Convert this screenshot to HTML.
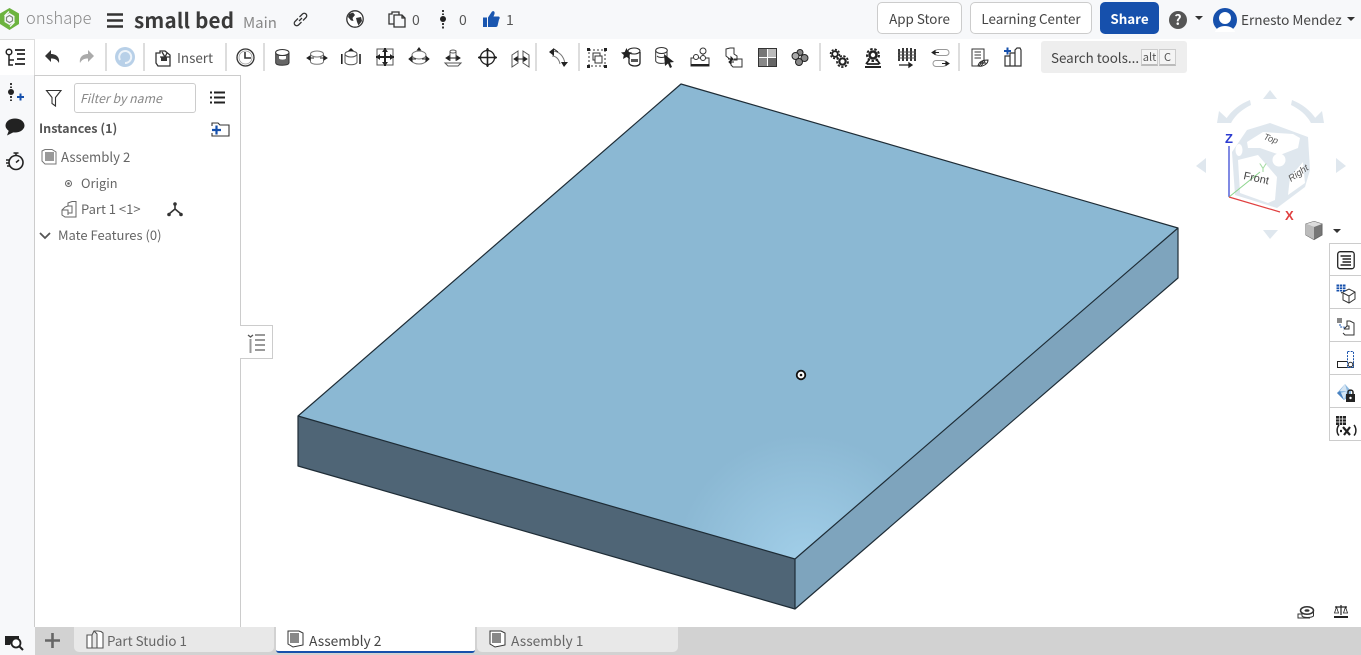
<!DOCTYPE html>
<html><head><meta charset="utf-8"><style>
html,body{margin:0;padding:0}
body{width:1361px;height:655px;position:relative;overflow:hidden;background:#fff;font-family:"Noto Sans CJK JP","Liberation Sans",sans-serif;color:#444}
.a{position:absolute}
.t{position:absolute;white-space:nowrap;line-height:18px}
.btn{position:absolute;top:2px;height:32px;box-sizing:border-box;border:1px solid #ccc;border-radius:5px;background:#fff;font-size:13.4px;text-align:center;line-height:30px;color:#444}
.sep{position:absolute;top:43px;width:2px;height:28px;background:#ddd}
svg{position:absolute;overflow:visible}
.s{fill:none;stroke:#333;stroke-width:1.3}
.tab{position:absolute;top:627px;height:25px;background:#e8e8e8;border-radius:0 0 5px 5px}
.rb{position:absolute;left:1329px;width:32px;height:33px;box-sizing:border-box;background:#fff;border:1px solid #ccc;border-right:none;border-top:none}
</style></head><body>
<div class="a" style="left:0;top:0;width:1361px;height:39px;background:#f7f8fa"></div>
<div class="a" style="left:0;top:39px;width:34px;height:588px;background:#f7f8fa"></div>
<div class="a" style="left:34px;top:39px;width:1327px;height:36px;background:#fff"></div>
<div class="a" style="left:0;top:39px;width:35px;height:36px;background:#fff;border-top:1px solid #ddd;border-right:1px solid #ddd;box-sizing:border-box"></div>

<!-- logo -->
<svg style="left:0;top:8px" width="20" height="22" viewBox="0 0 20 22"><path d="M9.500 0 19 5.500V16L9.500 22 0 16V5.500Z" fill="#6cb33f"/><path d="M9.500 5 14.500 8V14L9.500 17 4.500 14V8Z" fill="#f7f8fa"/><path d="M9.500 7.500 12.500 9.300V12.800L9.500 14.500 6.500 12.800V9.300Z" fill="none" stroke="#7d8a78" stroke-width="1.200"/><path d="M4.500 8 9 3.500M14.500 14 10 18.500" stroke="#f7f8fa" stroke-width="1.300"/></svg>
<div class="t" style="left:26px;top:8px;font-size:16.4px;color:#888;letter-spacing:.2px;font-weight:300">onshape</div>
<svg style="left:107px;top:13px" width="17" height="15"><path d="M0 1.500H16M0 7.500H16M0 13.500H16" stroke="#333" stroke-width="2.600" fill="none"/></svg>
<div class="t" style="left:134px;top:10px;font-size:20.6px;font-weight:700;color:#3a3a3a;letter-spacing:.2px">small bed</div>
<div class="t" style="left:243px;top:14px;font-size:15px;color:#888">Main</div>
<svg style="left:293px;top:12px" width="15" height="15" viewBox="0 0 15 15"><path d="M6 9 9 6M5 6.500 2 9.500a2.400 2.400 0 0 0 3.500 3.500L8.500 10M6.500 5 9.500 2a2.400 2.400 0 0 1 3.500 3.500L10 8.500" class="s" stroke-width="1.500"/></svg>
<svg style="left:346px;top:10px" width="18" height="18" viewBox="0 0 18 18"><circle cx="9" cy="9" r="8.200" fill="#fff" stroke="#333" stroke-width="1.300"/><path d="M3 4 7 2.500 9 5 6.500 8 7.500 11 5 10.500 2 7ZM10 8 15 7 16 11 12.500 15.500 11 12Z" fill="#333"/></svg>
<svg style="left:388px;top:11px" width="18" height="17" viewBox="0 0 18 17"><path d="M1 3H4V1H11V4H14L17 7V16H6V13H1ZM6 13V4H14M14 4V7H17" class="s"/></svg>
<div class="t" style="left:412px;top:11px;font-size:14px;color:#555">0</div>
<svg style="left:440px;top:10px" width="6" height="20"><path d="M3 0V5M3 13V19" stroke="#222" stroke-width="1.800" stroke-dasharray="2 1.500"/><circle cx="3" cy="9" r="3" fill="#222"/></svg>
<div class="t" style="left:459px;top:11px;font-size:14px;color:#555">0</div>
<svg style="left:483px;top:10px" width="17" height="18" viewBox="0 0 17 18"><path d="M0 7.500H4V17H0ZM5 7.500 9 1.500C11 0.500 12 2 11.500 4L10.500 6.500H15.500C17 6.500 17 8.500 16 9.500L14.500 16C14 17 13 17 12 17H5Z" fill="#1a56b0"/></svg>
<div class="t" style="left:506px;top:11px;font-size:14px;color:#555">1</div>

<div class="btn" style="left:877px;width:85px">App Store</div>
<div class="btn" style="left:970px;width:122px">Learning Center</div>
<div class="btn" style="left:1100px;width:59px;background:#1650ac;border-color:#1650ac;color:#fff;font-weight:700">Share</div>
<svg style="left:1169px;top:11px" width="18" height="18"><circle cx="9" cy="9" r="9" fill="#555"/></svg>
<div class="t" style="left:1169px;top:11px;width:18px;text-align:center;font-size:14px;font-weight:700;color:#fff">?</div>
<svg style="left:1195px;top:16px" width="9" height="5"><path d="M0 0H8L4 4Z" fill="#333"/></svg>
<svg style="left:1213px;top:8px" width="24" height="24" viewBox="0 0 24 24"><circle cx="12" cy="12" r="12" fill="#1650ac"/><circle cx="12" cy="10" r="6" fill="#fff"/><path d="M2 24C4 16 20 16 22 24Z" fill="#fff"/></svg>
<div class="t" style="left:1241px;top:10px;font-size:13.6px;color:#444">Ernesto Mendez</div>
<svg style="left:1347px;top:17px" width="9" height="5"><path d="M0 0H8L4 4Z" fill="#333"/></svg>

<!-- left rail -->
<svg style="left:5px;top:48px" width="22" height="20" viewBox="0 0 22 20"><circle cx="4" cy="4" r="2.800" fill="none" stroke="#222" stroke-width="1.500"/><path d="M4 7V17H8M4 12H9" fill="none" stroke="#222" stroke-width="1.500"/><path d="M10 2H20M12 6H20M12 11H20M10 16H20" stroke="#222" stroke-width="1.800"/></svg>
<svg style="left:8px;top:83px" width="18" height="20"><path d="M3 0V5M3 13V18" stroke="#222" stroke-width="1.800" stroke-dasharray="2 1.500"/><circle cx="3" cy="9" r="3" fill="#222"/><path d="M9 14H16M12.500 10.500V17.500" stroke="#1650ac" stroke-width="2"/></svg>
<svg style="left:5px;top:118px" width="20" height="18"><ellipse cx="10" cy="7.500" rx="9.500" ry="7" fill="#222"/><path d="M4 12 2 17.500 9 14Z" fill="#222"/></svg>
<svg style="left:6px;top:152px" width="19" height="19" viewBox="0 0 19 19"><circle cx="10" cy="10.500" r="7" fill="none" stroke="#222" stroke-width="1.600"/><path d="M7.500 1H12.500M10 1V3.500M10 10.500 13 8M0 8H4M0 11H3M1 14H4" stroke="#222" stroke-width="1.500" fill="none"/></svg>

<!-- toolbar -->
<svg style="left:45px;top:50px" width="15" height="14"><path d="M0 6 6 0V4C11 4 15 7 14 13 12 9.500 10 8.500 6 8.500V12Z" fill="#333"/></svg>
<svg style="left:80px;top:50px" width="15" height="14"><path d="M14 6 8 0V4C3 4-1 7 0 13 2 9.500 4 8.500 8 8.500V12Z" fill="#aaa"/></svg>
<div class="sep" style="left:105px"></div>
<svg style="left:115px;top:47px" width="21" height="21"><circle cx="10" cy="10" r="10" fill="#b8d0e8"/><path d="M5 13A6 6 0 1 1 10 16" fill="none" stroke="#eef4fa" stroke-width="2"/></svg>
<div class="sep" style="left:143px"></div>
<svg style="left:155px;top:49px" width="16" height="18" viewBox="0 0 16 18"><path d="M1 4H5V2H10L15 6V17H3L1 14ZM5 8H15M7 3 10 8 12 4" class="s"/><path d="M6 8H12V12H6Z" fill="#333"/></svg>
<div class="t" style="left:177px;top:48px;font-size:13.4px;color:#555">Insert</div>
<div class="sep" style="left:225px"></div>
<svg style="left:236px;top:48px" width="19" height="19"><circle cx="9.500" cy="9.500" r="8.500" fill="none" stroke="#333" stroke-width="1.300"/><circle cx="9.500" cy="9.500" r="6.500" fill="none" stroke="#999" stroke-width=".8"/><path d="M9 4V10H15" fill="none" stroke="#333" stroke-width="1.600"/></svg>
<div class="sep" style="left:263px"></div>

<svg style="left:275px;top:49px" width="15" height="18"><path d="M0.700 3.500V14C1.500 17 13 17 14 14V3.500" fill="#666" stroke="#333"/><ellipse cx="7.300" cy="3.500" rx="6.700" ry="3" fill="#fff" stroke="#333"/><path d="M4 7V9.500C5 11 10 11 11 9.500V7" fill="#fff"/></svg>
<svg style="left:307px;top:50px" width="20" height="16"><ellipse cx="10" cy="4" rx="6.500" ry="3" fill="none" stroke="#777"/><path d="M3.500 4V12C5 15 15 15 16.500 12V4" fill="none" stroke="#777"/><path d="M0 8H7M0 8 3 6V10ZM20 8H13M20 8 17 6V10Z" fill="#222" stroke="#222"/></svg>
<svg style="left:341px;top:48px" width="20" height="18"><path d="M0.800 6V16M19 6V16" stroke="#222" stroke-width="1.600"/><ellipse cx="10" cy="6" rx="6" ry="3" fill="#fff" stroke="#555"/><path d="M4 6V14.500C6 17.500 14 17.500 16 14.500V6" fill="none" stroke="#555"/><path d="M10 0 7 3H13Z" fill="#222"/></svg>
<svg style="left:376px;top:48px" width="18" height="18"><rect x="1" y="1" width="16" height="16" fill="none" stroke="#555"/><path d="M9 0V18M0 9H18" stroke="#222" stroke-width="2"/><path d="M9 0 6 4H12ZM9 18 6 14H12ZM0 9 4 6V12ZM18 9 14 6V12Z" fill="#222"/></svg>
<svg style="left:409px;top:47px" width="21" height="20"><ellipse cx="10" cy="8" rx="7" ry="4" fill="none" stroke="#777"/><path d="M3 8V14C5 18 15 18 17 14V8" fill="none" stroke="#777"/><path d="M10 0 7.500 3.500H12.500Z" fill="#222"/><path d="M0 12H7M0 12 3 9.500V14.500ZM20 12H13M20 12 17 9.500V14.500Z" fill="#222" stroke="#222"/></svg>
<svg style="left:444px;top:49px" width="18" height="18"><path d="M6 2H12V12M6 2V12M1 14H17L14 17H4Z" fill="none" stroke="#555"/><ellipse cx="9" cy="2.500" rx="3" ry="1.500" fill="#fff" stroke="#555"/><path d="M2 9H16M2 9 5 7V11ZM16 9 13 7V11Z" fill="#222" stroke="#222"/></svg>
<svg style="left:478px;top:48px" width="19" height="19"><circle cx="9.500" cy="9.500" r="7" fill="none" stroke="#222" stroke-width="1.300"/><path d="M9.500 0V19M0 9.500H19" stroke="#222" stroke-width="1.600"/><path d="M9.500 0 7 3H12ZM9.500 19 7 16H12ZM0 9.500 3 7V12ZM19 9.500 16 7V12Z" fill="#222"/></svg>
<svg style="left:512px;top:50px" width="17" height="17"><path d="M0 5 6 1V13L0 17ZM17 5 11 1V13L17 17Z" fill="none" stroke="#555"/><path d="M2 9H15M2 9 5 7V11ZM15 9 12 7V11Z" fill="#222" stroke="#222"/></svg>
<div class="sep" style="left:535px"></div>
<svg style="left:549px;top:48px" width="20" height="20"><path d="M3 3C10 3 15 8 16 16M3 8C7 8 10 11 11 16" fill="none" stroke="#777"/><path d="M0 4 5 0V8ZM15 19 12 14H19Z" fill="#222"/><path d="M5 1 9 4" stroke="#222"/></svg>
<div class="sep" style="left:578px"></div>
<svg style="left:587px;top:48px" width="20" height="20"><rect x="2" y="2" width="16" height="16" fill="none" stroke="#333" stroke-dasharray="2 2"/><rect x="6" y="5" width="7" height="7" fill="none" stroke="#333"/><rect x="8" y="8" width="7" height="7" fill="#fff" stroke="#333"/><path d="M0 0H3V3H0ZM17 0H20V3H17ZM0 17H3V20H0ZM17 17H20V20H17Z" fill="#222"/></svg>
<svg style="left:621px;top:47px" width="20" height="20"><path d="M8 6V16C9 20 19 20 19 16V5" fill="#fff" stroke="#222" stroke-width="1.300"/><ellipse cx="13" cy="4" rx="6" ry="3" fill="#fff" stroke="#222"/><path d="M5.500 1 7.300 5 11 5.500 8.200 8 9 12 5.500 10 2 12 2.800 8 0 5.500 3.700 5Z" fill="#222"/><path d="M10 12V15H17V12Z" fill="#555"/></svg>
<svg style="left:655px;top:47px" width="20" height="22"><path d="M0.700 3.500V14C1.500 17 9 17 12 15V3.500" fill="#fff" stroke="#333"/><ellipse cx="6.500" cy="3.500" rx="5.800" ry="3" fill="#fff" stroke="#333"/><path d="M2 9C4 11 9 11 11 9" fill="none" stroke="#333"/><path d="M9 7 19 15 15 15.500 17 20 15 21 13 16.500 10 19Z" fill="#222"/></svg>
<svg style="left:690px;top:47px" width="20" height="20"><circle cx="13" cy="4" r="3" fill="none" stroke="#333"/><path d="M13 7V10" stroke="#333"/><path d="M1 11H19V19H1Z" fill="none" stroke="#333"/><circle cx="6" cy="10" r="2.500" fill="#fff" stroke="#333"/><circle cx="13" cy="11" r="2.500" fill="#fff" stroke="#333"/><path d="M1 18H19" stroke="#222" stroke-width="2"/></svg>
<svg style="left:725px;top:47px" width="18" height="21"><path d="M1 2 5 1 9 1V7L12 9V13H6L1 9ZM9 12H17V20H8L6 18V14" fill="#fff" stroke="#333"/><path d="M3 12H8M8 12 6 10V14ZM9 15H4M4 15 6 13V17Z" fill="#222" stroke="#222"/></svg>
<svg style="left:758px;top:48px" width="19" height="19"><rect width="19" height="19" fill="#fff"/><path d="M0 0H9V9H0Z" fill="#777"/><path d="M10 10H19V19H10Z" fill="#666"/><path d="M10 0H19V9H10Z" fill="#bbb"/><path d="M0 10H9V19H0Z" fill="#888"/><rect x=".5" y=".5" width="18" height="18" fill="none" stroke="#333"/></svg>
<svg style="left:791px;top:49px" width="18" height="17"><circle cx="9" cy="3.500" r="3" fill="#888" stroke="#222"/><circle cx="13.500" cy="9" r="3.500" fill="#888" stroke="#222"/><circle cx="4.500" cy="7" r="3.500" fill="#aaa" stroke="#222"/><circle cx="8" cy="13" r="3.500" fill="#888" stroke="#222"/></svg>
<div class="sep" style="left:819px"></div>
<svg style="left:830px;top:49px" width="19" height="19"><circle cx="5" cy="5" r="2.800" fill="none" stroke="#222" stroke-width="1.800"/><circle cx="5" cy="5" r="4.500" fill="none" stroke="#222" stroke-width="1.500" stroke-dasharray="2 1.500"/><circle cx="12.500" cy="12.500" r="3.200" fill="none" stroke="#222" stroke-width="2.200"/><circle cx="12.500" cy="12.500" r="5.500" fill="none" stroke="#222" stroke-width="1.800" stroke-dasharray="2.300 1.500"/></svg>
<svg style="left:864px;top:48px" width="18" height="20"><circle cx="9" cy="7" r="3.500" fill="none" stroke="#222" stroke-width="2.600"/><circle cx="9" cy="7" r="6" fill="none" stroke="#222" stroke-width="2" stroke-dasharray="2.500 1.700"/><path d="M1 19H17" stroke="#222" stroke-width="2"/><path d="M2 16 5 12M16 16 13 12M3 16H15" stroke="#222" stroke-width="1.800"/></svg>
<svg style="left:898px;top:47px" width="18" height="20"><path d="M1 2 1 14M5 1 5 14M9 1 9 14M13 1 13 14M17 2 17 14" stroke="#222" stroke-width="1.800"/><path d="M0 5H18M0 8H18M0 11H18" stroke="#555"/><path d="M1 18H14M14 18 11 16V20Z" fill="#222" stroke="#222" stroke-width="1.300"/></svg>
<svg style="left:932px;top:49px" width="18" height="18"><rect x="3" y="0.500" width="14" height="6" rx="3" fill="#fff" stroke="#999"/><rect x="1" y="11.500" width="13" height="6" rx="3" fill="#fff" stroke="#999"/><path d="M0 3.500H7M0 3.500 3 1.500V5.500ZM17 14.500H10M17 14.500 14 12.500V16.500Z" fill="#222" stroke="#222"/></svg>
<div class="sep" style="left:958px"></div>
<svg style="left:971px;top:48px" width="18" height="20"><path d="M1 1H13V12L8 18H1Z" fill="#fff" stroke="#333"/><path d="M3.500 4H10M3.500 7H10M3.500 10H10" stroke="#333"/><path d="M7 18C8 13 13 12 17 12 17 16 12 19 7 18ZM9 15H15M10 18 14 13" fill="none" stroke="#222"/></svg>
<svg style="left:1004px;top:47px" width="18" height="20"><path d="M1 9H6V19H1ZM6 6H11V19H6ZM11 3 13 1H16L17 3V19H11Z" fill="#fff" stroke="#333" stroke-width="1.200"/><path d="M0 4H7M3.500 0.500V7.500" stroke="#1650ac" stroke-width="2"/></svg>

<div class="a" style="left:1041px;top:41px;width:146px;height:32px;background:#eee;border-radius:3px"></div>
<div class="t" style="left:1051px;top:48px;font-size:13.4px;color:#444">Search tools...</div>
<div class="a" style="left:1141px;top:49px;width:17px;height:17px;background:#f4f4f4;border:1px solid #ccc;border-bottom:2px solid #bbb;box-sizing:border-box;font-size:11px;line-height:15px;text-align:center;color:#555">alt</div>
<div class="a" style="left:1159px;top:49px;width:17px;height:17px;background:#f4f4f4;border:1px solid #ccc;border-bottom:2px solid #bbb;box-sizing:border-box;font-size:11px;line-height:15px;text-align:center;color:#555">C</div>

<!-- left panel -->
<div class="a" style="left:34px;top:75px;width:207px;height:552px;box-sizing:border-box;border:1px solid #ccc;border-bottom:none;background:#fff"></div>
<svg style="left:46px;top:90px" width="16" height="17"><path d="M0.500 0.500H15L9.500 7.500V16L6 13.500V7.500Z" fill="#fff" stroke="#333" stroke-width="1.100"/></svg>
<div class="a" style="left:74px;top:83px;width:122px;height:30px;box-sizing:border-box;border:1px solid #ccc;border-radius:3px;background:#fff;font-size:12.3px;font-style:italic;color:#888;line-height:28px;padding-left:5px">Filter by name</div>
<svg style="left:210px;top:91px" width="15" height="14"><path d="M0 1.500H2M4 1.500H15M0 6.500H2M4 6.500H15M0 11.500H2M4 11.500H15" stroke="#222" stroke-width="2"/></svg>
<div class="t" style="left:39px;top:119px;font-size:12.6px;font-weight:700;color:#555">Instances (1)</div>
<svg style="left:211px;top:122px" width="19" height="15"><path d="M1 4V1H7L9 3H18V14H1V11" fill="none" stroke="#333" stroke-width="1.100"/><path d="M1 8H10M5.500 3.500V12.500" stroke="#1650ac" stroke-width="2.200"/></svg>
<svg style="left:41px;top:149px" width="16" height="16"><path d="M1 2 4 0.500H11L15 3V15H4L1 12Z" fill="#fff" stroke="#777"/><path d="M4 3H13V12H4Z" fill="#999"/></svg>
<div class="t" style="left:61px;top:148px;font-size:13.2px;color:#666">Assembly 2</div>
<svg style="left:65px;top:180px" width="7" height="7"><circle cx="3.500" cy="3.500" r="3" fill="none" stroke="#666"/><circle cx="3.500" cy="3.500" r="1.300" fill="#666"/></svg>
<div class="t" style="left:81px;top:174px;font-size:12.8px;color:#666">Origin</div>
<svg style="left:61px;top:201px" width="16" height="17"><path d="M1 9 4 6 7 5V2L11 0.500H15V16H4L1 14ZM1 9H7V14" fill="#fff" stroke="#666"/><path d="M7 5 11 5V12H7" fill="none" stroke="#666"/></svg>
<div class="t" style="left:81px;top:200px;font-size:13px;color:#666">Part 1 &lt;1&gt;</div>
<svg style="left:167px;top:202px" width="16" height="15"><path d="M8 7V2M8 7 2 12M8 7 14 12" stroke="#333" stroke-width="1.600"/><circle cx="8" cy="2" r="1.800" fill="#333"/><circle cx="2" cy="12.500" r="1.800" fill="#333"/><circle cx="14" cy="12.500" r="1.800" fill="#333"/></svg>
<svg style="left:39px;top:232px" width="12" height="8"><path d="M1 1 6 6 11 1" fill="none" stroke="#555" stroke-width="1.800"/></svg>
<div class="t" style="left:58px;top:226px;font-size:13px;color:#666">Mate Features (0)</div>

<!-- panel tab -->
<div class="a" style="left:240px;top:325px;width:33px;height:34px;box-sizing:border-box;border:1px solid #ccc;border-left:none;background:#fff"></div>
<svg style="left:247px;top:334px" width="20" height="19"><path d="M1 1 3.500 3 6 1" fill="none" stroke="#555" stroke-width="1.300"/><path d="M3.500 5V19" stroke="#999" stroke-width="2"/><path d="M8 1H18M8 6H18M8 11H18M8 16H18" stroke="#333"/></svg>

<!-- model -->
<svg style="left:0;top:0" width="1361" height="655">
<defs><radialGradient id="g" gradientUnits="userSpaceOnUse" cx="805" cy="565" r="130"><stop offset="0" stop-color="#a2cfe9"/><stop offset="1" stop-color="#8bb8d3"/></radialGradient></defs>
<polygon points="298,416 795,559 795,609 298,466" fill="#4f6576"/>
<polygon points="795,559 1178,228 1178,278 795,609" fill="#7ea4bd"/>
<polygon points="681,84 1178,228 795,559 298,416" fill="url(#g)"/>
<path d="M681,84 1178,228 795,559 298,416ZM298,416V466L795,609V559M795,609 1178,278V228" fill="none" stroke="#1e2c36" stroke-width="1.200" stroke-linejoin="round"/>
<circle cx="801" cy="375" r="4.300" fill="#fff" stroke="#111" stroke-width="1.800"/><circle cx="801" cy="375" r="1.300" fill="#111"/>
</svg>

<!-- view cube -->
<svg style="left:1190px;top:85px" width="150" height="160">
<g fill="#dfe7ee">
<path d="M80 5 73 14H87Z"/><path d="M80 154 73 145H88Z"/><path d="M6 81 16 73V88Z"/><path d="M156 81 146 73V88Z"/>
<path d="M27 38 29 26 42 38 36 34C42 25 50 19 60 15L61 20C53 24 46 29 41 38Z"/>
<path d="M134 38 132 26 120 38 126 34C120 25 112 19 102 15L101 20C109 24 116 29 121 38Z"/>
</g>
<path d="M57 45 80 38 118 52 120 85 115 102 87 123 45 110 42 67Z" fill="#dfe7ee"/>
<path d="M57 57 73 47 103 49 110 53 108 63 90 70 70 63 58 63Z" fill="#fff"/>
<path d="M48 75 68 70 87 92 85 115 78 118 50 108Z" fill="#fff"/>
<path d="M100 92 113 77 115 98 98 110Z" fill="#fff"/>
<circle cx="89" cy="75" r="6.500" fill="#fff"/><ellipse cx="49" cy="65" rx="3.500" ry="6" fill="#fff"/>
<path d="M39 61V112" stroke="#2b3bd0" stroke-width="1.200"/>
<path d="M39 112 70 87" stroke="#8dd58d" stroke-width="1"/>
<path d="M39 112 90 127" stroke="#e04040" stroke-width="1.200"/>
<text x="34" y="58" font-size="13" font-weight="700" fill="#2b3bd0" font-family="Liberation Sans,sans-serif" text-anchor="middle" dx="5">Z</text>
<text x="69" y="87" font-size="12" fill="#a5dca5" font-family="Liberation Sans,sans-serif">Y</text>
<text x="95" y="135" font-size="13" font-weight="700" fill="#e04040" font-family="Liberation Sans,sans-serif">X</text>
<text x="53" y="94" font-size="11" fill="#444" font-family="Liberation Sans,sans-serif" transform="rotate(12 53 94)">Front</text>
<text x="73" y="54" font-size="9" font-style="italic" fill="#555" font-family="Liberation Sans,sans-serif" transform="rotate(20 73 54)">Top</text>
<text x="101" y="97" font-size="9.500" font-style="italic" fill="#555" font-family="Liberation Sans,sans-serif" transform="rotate(-35 101 97)">Right</text>
</svg>
<svg style="left:1305px;top:221px" width="18" height="19"><path d="M9 0.500 17 3V14L9 18.500 1 14V3Z" fill="#777" stroke="#666"/><path d="M9 0.500 17 3 9 6 1 3Z" fill="#ddd"/><path d="M1 3 9 6V18.500L1 14Z" fill="#bbb"/></svg>
<svg style="left:1333px;top:229px" width="9" height="5"><path d="M0 0H8L4 4Z" fill="#333"/></svg>

<!-- right buttons -->
<div class="rb" style="top:243px;border-top:1px solid #ccc"></div>
<svg style="left:1337px;top:251px" width="18" height="19"><rect x=".7" y=".7" width="16.500" height="17" rx="2.500" fill="none" stroke="#222" stroke-width="1.300"/><path d="M3.500 5H14M5.500 8H14M5.500 11H14M3.500 14H14" stroke="#222" stroke-width="1.500"/></svg>
<div class="rb" style="top:276px"></div>
<svg style="left:1336px;top:284px" width="20" height="20"><path d="M5 9 13 5 19 8V15L13 19 7 16V9M7 9 13 12 19 8M13 12V19" fill="#fff" stroke="#333"/><rect x="0.500" y="0.500" width="9" height="7" fill="#1650ac"/><path d="M0 3H10M0 5.500H10M3.500 0V8M6.500 0V8" stroke="#fff" stroke-width=".7"/></svg>
<div class="rb" style="top:309px"></div>
<svg style="left:1337px;top:318px" width="18" height="19"><rect width="5" height="5" fill="#888"/><path d="M3 6V9H7V14" fill="none" stroke="#1650ac" stroke-dasharray="2 1.200"/><path d="M7 11 10 8V3H13L17 5V17H8L6 15" fill="#fff" stroke="#333"/><path d="M7 11H12V8H10" fill="none" stroke="#333"/></svg>
<div class="rb" style="top:342px"></div>
<svg style="left:1337px;top:351px" width="18" height="18"><rect x="0.500" y="10.500" width="16" height="6" fill="none" stroke="#222"/><rect x="10.500" y="0.500" width="6" height="16" fill="#fff" stroke="#1650ac" stroke-dasharray="2 1.200"/><circle cx="13.500" cy="13.500" r="2.300" fill="none" stroke="#333"/></svg>
<div class="rb" style="top:375px"></div>
<svg style="left:1337px;top:384px" width="18" height="20"><path d="M8 0 14 7V12L7 16 0 9Z" fill="#8db9e0"/><path d="M8 0 10 7H3ZM10 7 7 16 4 9Z" fill="#d5e5f3"/><path d="M0 9 3 7 4 9 7 16Z" fill="#4a82c0"/><rect x="9" y="10" width="9" height="8" fill="#222"/><path d="M11 10V8C11 5.500 16 5.500 16 8V10" fill="none" stroke="#222" stroke-width="1.500"/><circle cx="13.500" cy="14" r="1.200" fill="#fff"/></svg>
<div class="rb" style="top:408px"></div>
<svg style="left:1336px;top:416px" width="10" height="9"><rect width="10" height="9" fill="#222"/><path d="M0 3H10M0 6H10M3.300 0V9M6.600 0V9" stroke="#fff" stroke-width=".7"/></svg>
<svg style="left:1336px;top:425px" width="21" height="11"><path d="M3 0C0.500 3 0.500 8 3 10.500M18 0C20.500 3 20.500 8 18 10.500" fill="none" stroke="#222" stroke-width="1.500"/><path d="M7 2 14 10M14 2 8 10M4 6H6" stroke="#222" stroke-width="2.200"/></svg>

<!-- measure icons -->
<svg style="left:1298px;top:606px" width="16" height="13"><ellipse cx="9" cy="4.500" rx="6.500" ry="3.800" fill="none" stroke="#333" stroke-width="1.500"/><ellipse cx="9" cy="4.500" rx="2.500" ry="1.300" fill="#333"/><path d="M15.500 5V10C13 12 6 12 4 10V8M4 8H0V12H12" fill="none" stroke="#333"/></svg>
<svg style="left:1334px;top:605px" width="14" height="15"><path d="M7 0V10M1 2H13" stroke="#222" stroke-width="1.200"/><path d="M2.500 2 0.500 8H4.500ZM11.500 2 9.500 8H13.500Z" fill="#fff" stroke="#222" stroke-width=".8"/><path d="M0 12H14" stroke="#222" stroke-width="2"/></svg>

<!-- bottom bar -->
<div class="a" style="left:0;top:627px;width:35px;height:28px;background:#f7f8fa"></div>
<svg style="left:5px;top:634px" width="19" height="18"><path d="M0 2H14V5H8L5 11H0Z" fill="#222"/><circle cx="11" cy="9" r="4.500" fill="#fff" stroke="#222" stroke-width="1.800"/><path d="M14 12 18 16" stroke="#222" stroke-width="2"/></svg>
<div class="a" style="left:35px;top:627px;width:1326px;height:28px;background:#d2d2d2"></div>
<svg style="left:45px;top:633px" width="15" height="15"><path d="M7.500 0V15M0 7.500H15" stroke="#666" stroke-width="2.600"/></svg>
<div class="tab" style="left:74px;width:200px"></div>
<svg style="left:86px;top:630px" width="18" height="19"><path d="M1 5H6V18H1ZM6 5 8 1H12L15 1.500 17 3V18H11V4L8 1M11 18H6" fill="#fff" stroke="#555" stroke-width="1.100"/></svg>
<div class="t" style="left:107px;top:631px;font-size:13.4px;color:#666">Part Studio 1</div>
<div class="tab" style="left:276px;width:199px;background:#fff;height:26px;border-bottom:2px solid #1650ac;box-sizing:border-box;border-radius:0 0 3px 3px"></div>
<svg style="left:287px;top:630px" width="17" height="18"><path d="M1 1H12L16 3V15L6 17 1 14Z" fill="#fff" stroke="#333"/><path d="M3 3H12V13H3Z" fill="#888"/></svg>
<div class="t" style="left:309px;top:631px;font-size:13.8px;color:#444">Assembly 2</div>
<div class="tab" style="left:477px;width:201px"></div>
<svg style="left:489px;top:630px" width="17" height="18"><path d="M1 1H12L16 3V15L6 17 1 14Z" fill="#fff" stroke="#333"/><path d="M3 3H12V13H3Z" fill="#888"/></svg>
<div class="t" style="left:511px;top:631px;font-size:13.8px;color:#666">Assembly 1</div>
</body></html>
